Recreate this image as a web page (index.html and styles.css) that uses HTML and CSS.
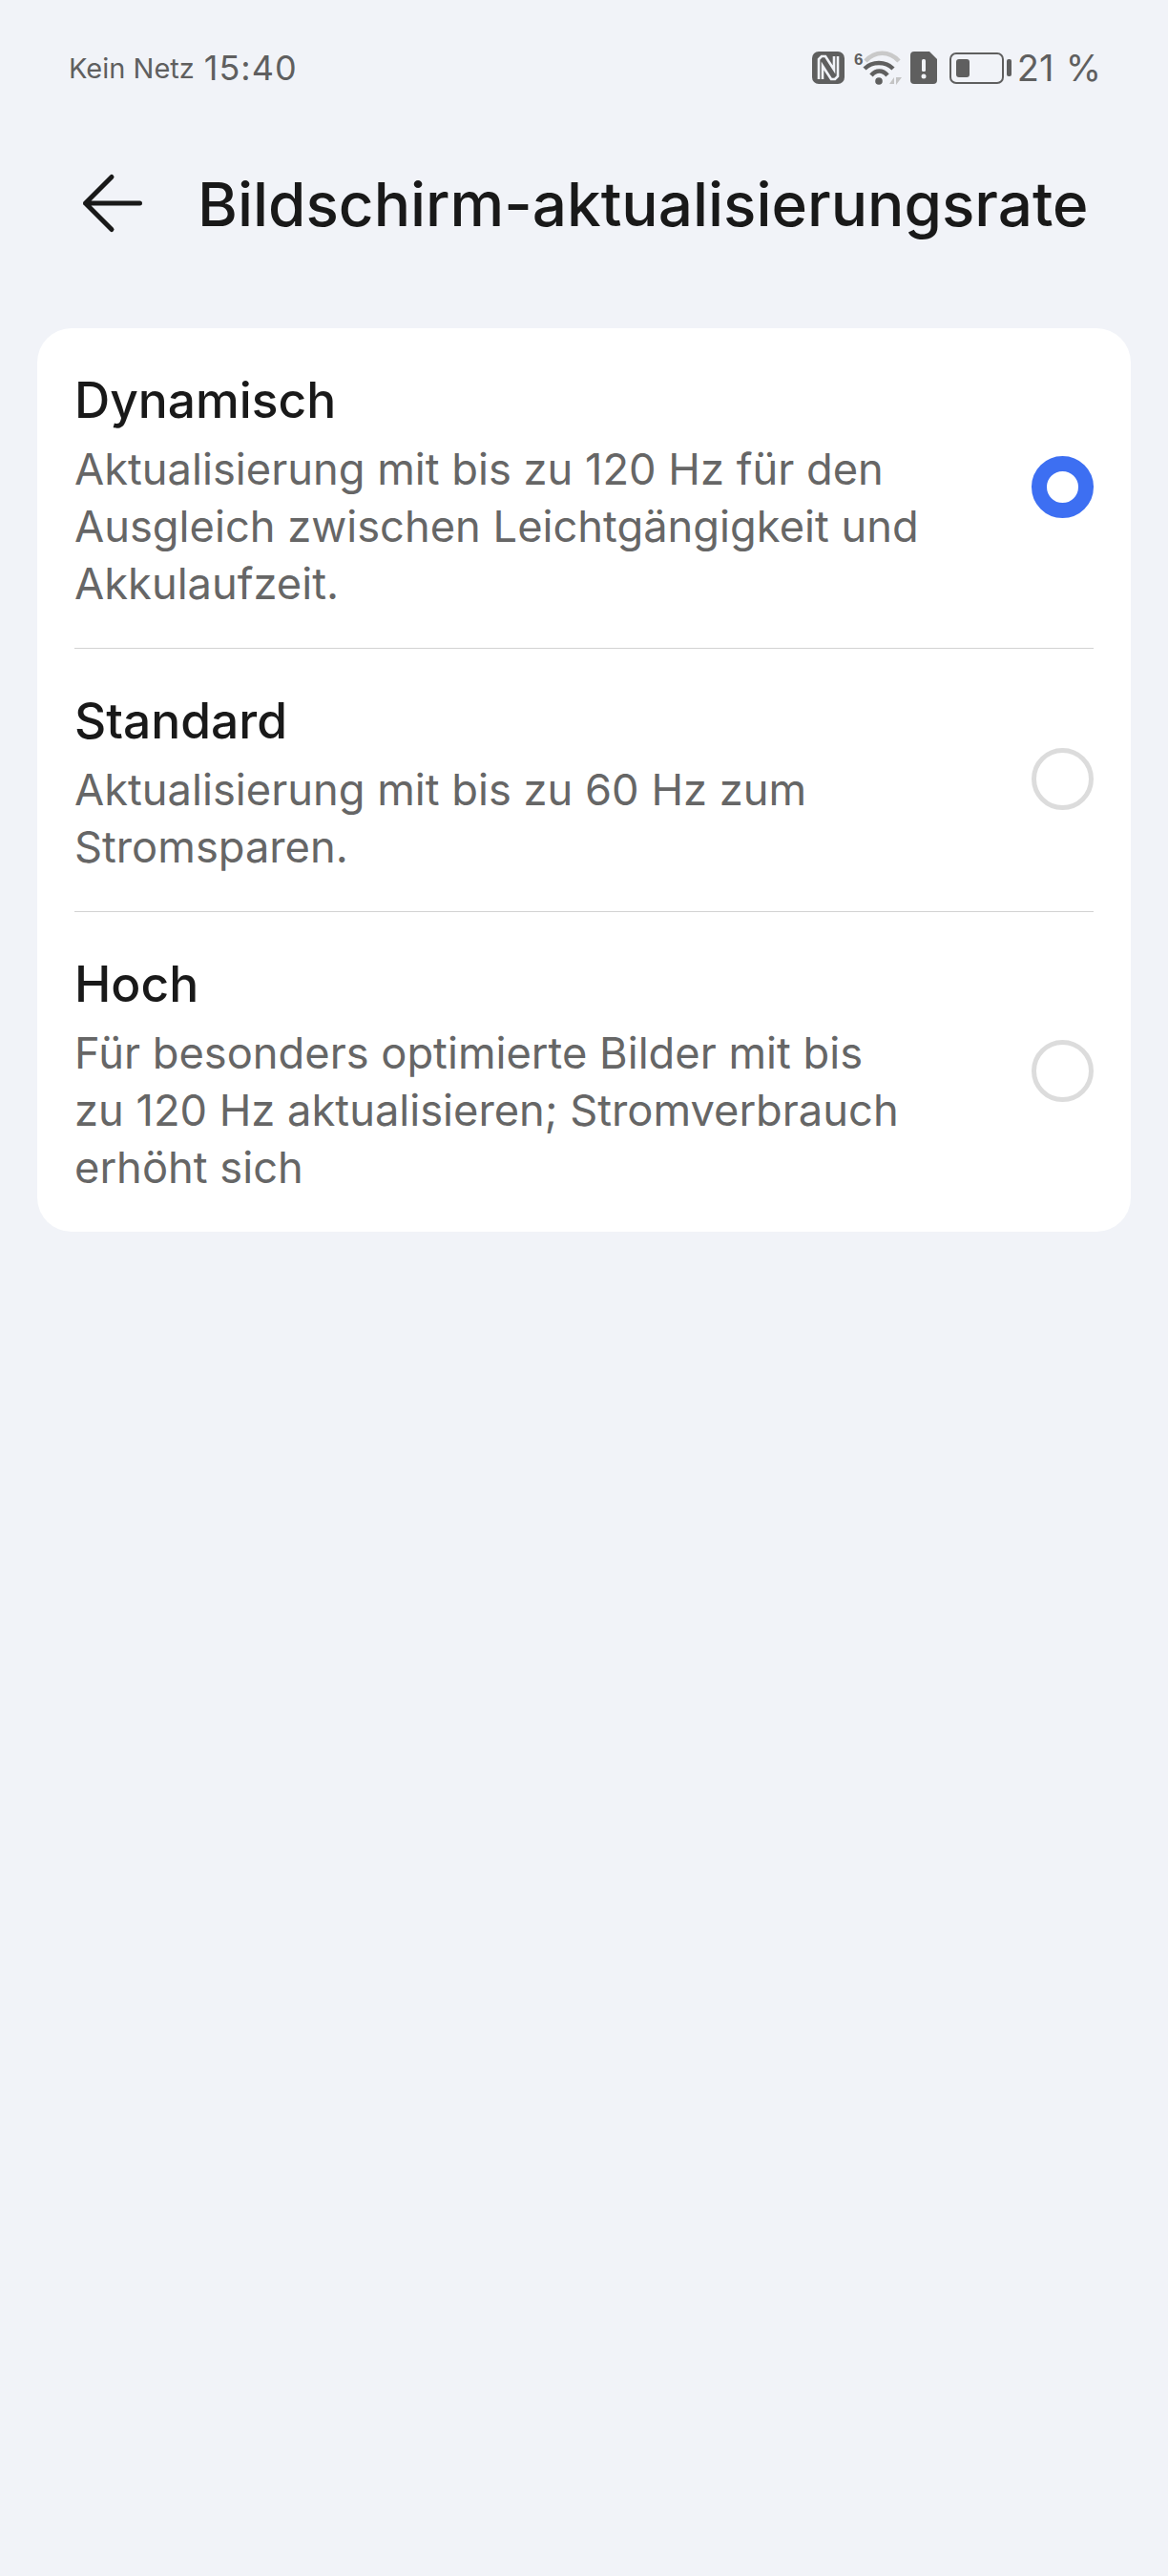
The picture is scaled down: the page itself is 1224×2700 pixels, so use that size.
FILE: index.html
```html
<!DOCTYPE html>
<html lang="de">
<head>
    <meta charset="UTF-8">
    <title>Bildschirm-aktualisierungsrate</title>
    <link rel="stylesheet" href="styles.css">
</head>
<body>

<div class="status_bar">
    <div class="status_left">
        <span class="net">Kein Netz</span>
        <span class="time">15:40</span>
    </div>
    <div class="status_right">
        <svg class="ic_nfc" width="34" height="34" viewBox="0 0 34 34">
            <rect x="0" y="0" width="34" height="34" rx="7" fill="#5f5f5f"/>
            <path d="M7 29V8L10 5H14L23 19V5M27 5V26L24 29H20L11 15V29" fill="none" stroke="#f1f3f8" stroke-width="2.6"/>
        </svg>
        <svg class="ic_wifi" width="50" height="44" viewBox="0 -4 50 44">
            <text x="0" y="15" class="wifi_six">6</text>
            <path d="M12 11C22 0 37 0 47 11" fill="none" stroke="#c9c9c9" stroke-width="4.5"/>
            <path d="M11 19C19 11 33 11 41 19" fill="none" stroke="#5f5f5f" stroke-width="4.5"/>
            <path d="M18 26C23 20 30 20 35 26" fill="none" stroke="#5f5f5f" stroke-width="4.5"/>
            <circle cx="26" cy="32" r="3.8" fill="#5f5f5f"/>
            <path d="M37 35L42 28V35ZM44 28V36L50 28Z" fill="#c4c4c4"/>
        </svg>
        <svg class="ic_sim" width="28" height="34" viewBox="0 0 28 34">
            <path d="M4 0H20L28 8V30a4 4 0 0 1-4 4H4a4 4 0 0 1-4-4V4a4 4 0 0 1 4-4Z" fill="#5f5f5f"/>
            <rect x="12" y="8" width="4" height="13" rx="1.5" fill="#f1f3f8"/>
            <circle cx="14" cy="26" r="2.5" fill="#f1f3f8"/>
        </svg>
        <div class="battery">
            <div class="battery_body"><div class="battery_level"></div></div>
            <div class="battery_cap"></div>
        </div>
        <span class="percent">21 %</span>
    </div>
</div>

<div class="title_bar">
    <svg class="back" width="66" height="64" viewBox="0 0 66 64">
        <path d="M61.5 32H4.5M32 4.5L4.5 32L32 59.5" fill="none" stroke="#191919" stroke-width="5" stroke-linecap="round" stroke-linejoin="round"/>
    </svg>
    <h1>Bildschirm-aktualisierungsrate</h1>
</div>

<div class="card">
    <div class="row row_first">
        <div class="row_text">
            <div class="row_title">Dynamisch</div>
            <div class="row_desc">Aktualisierung mit bis zu 120 Hz für den<br>Ausgleich zwischen Leichtgängigkeit und<br>Akkulaufzeit.</div>
        </div>
        <div class="radio radio_on"></div>
    </div>
    <div class="row">
        <div class="row_text">
            <div class="row_title">Standard</div>
            <div class="row_desc">Aktualisierung mit bis zu 60 Hz zum<br>Stromsparen.</div>
        </div>
        <div class="radio"></div>
    </div>
    <div class="row">
        <div class="row_text">
            <div class="row_title">Hoch</div>
            <div class="row_desc">Für besonders optimierte Bilder mit bis<br>zu 120 Hz aktualisieren; Stromverbrauch<br>erhöht sich</div>
        </div>
        <div class="radio"></div>
    </div>
</div>

</body>
</html>
```

FILE: styles.css
```css
html,body{ margin: 0; height: 100%;}
body{
    background: #f1f3f8;
    font-family: "Inter", "Noto Sans", sans-serif;
    color: #191919;
}
.status_bar{
    display: flex;
    justify-content: space-between;
    align-items: center;
    height: 40px;
    padding: 51px 70px 0 72px;
    color: #5f5f5f;
}
.status_left,.status_right{
    display: flex;
    align-items: center;
}
.net{ font-size: 29px; margin-right: 10px;}
.time{ font-size: 36px; letter-spacing: 1px;}
.ic_nfc{ margin-right: 10px;}
.ic_wifi{ margin-right: 9px;}
.wifi_six{ font-family: "Liberation Sans", sans-serif; font-size: 17px; font-weight: 700; fill: #5f5f5f;}
.ic_sim{ margin-right: 13px;}
.battery{
    display: flex;
    align-items: center;
    margin-right: 6px;
}
.battery_body{
    width: 57px;
    height: 33px;
    box-sizing: border-box;
    padding: 5px;
    border: 2.5px solid #5f5f5f;
    border-radius: 7px;
}
.battery_level{
    width: 14px;
    height: 100%;
    background: #5f5f5f;
    border-radius: 3px;
}
.battery_cap{
    width: 5px;
    height: 18px;
    margin-left: 3px;
    background: #5f5f5f;
    border-radius: 2px;
}
.percent{ font-size: 38px; word-spacing: 1.5px;}
.title_bar{
    display: flex;
    align-items: center;
    height: 64px;
    margin-top: 90px;
    padding-left: 85px;
}
.back{ flex: none; margin-right: 56px;}
h1{
    margin: 0;
    font-size: 63.8px;
    font-weight: 500;
    white-space: nowrap;
}
.card{
    margin: 99px 39px 0;
    padding: 0 39px;
    background: white;
    border-radius: 36px;
}
.row{
    display: flex;
    align-items: center;
    justify-content: space-between;
    padding: 44px 0 37px;
    border-top: 1px solid #d2d2d2;
}
.row_first{ border-top: none;}
.row_title{
    font-size: 51.5px;
    line-height: 62px;
    font-weight: 500;
    margin-bottom: 12px;
}
.row_desc{
    font-size: 45.25px;
    line-height: 60px;
    color: #666;
}
.radio{
    flex: none;
    width: 65px;
    height: 65px;
    margin-bottom: 9px;
    box-sizing: border-box;
    border: 5px solid #dcdcdc;
    border-radius: 50%;
}
.radio_on{
    border: 16px solid #3d6ff2;
}
```
